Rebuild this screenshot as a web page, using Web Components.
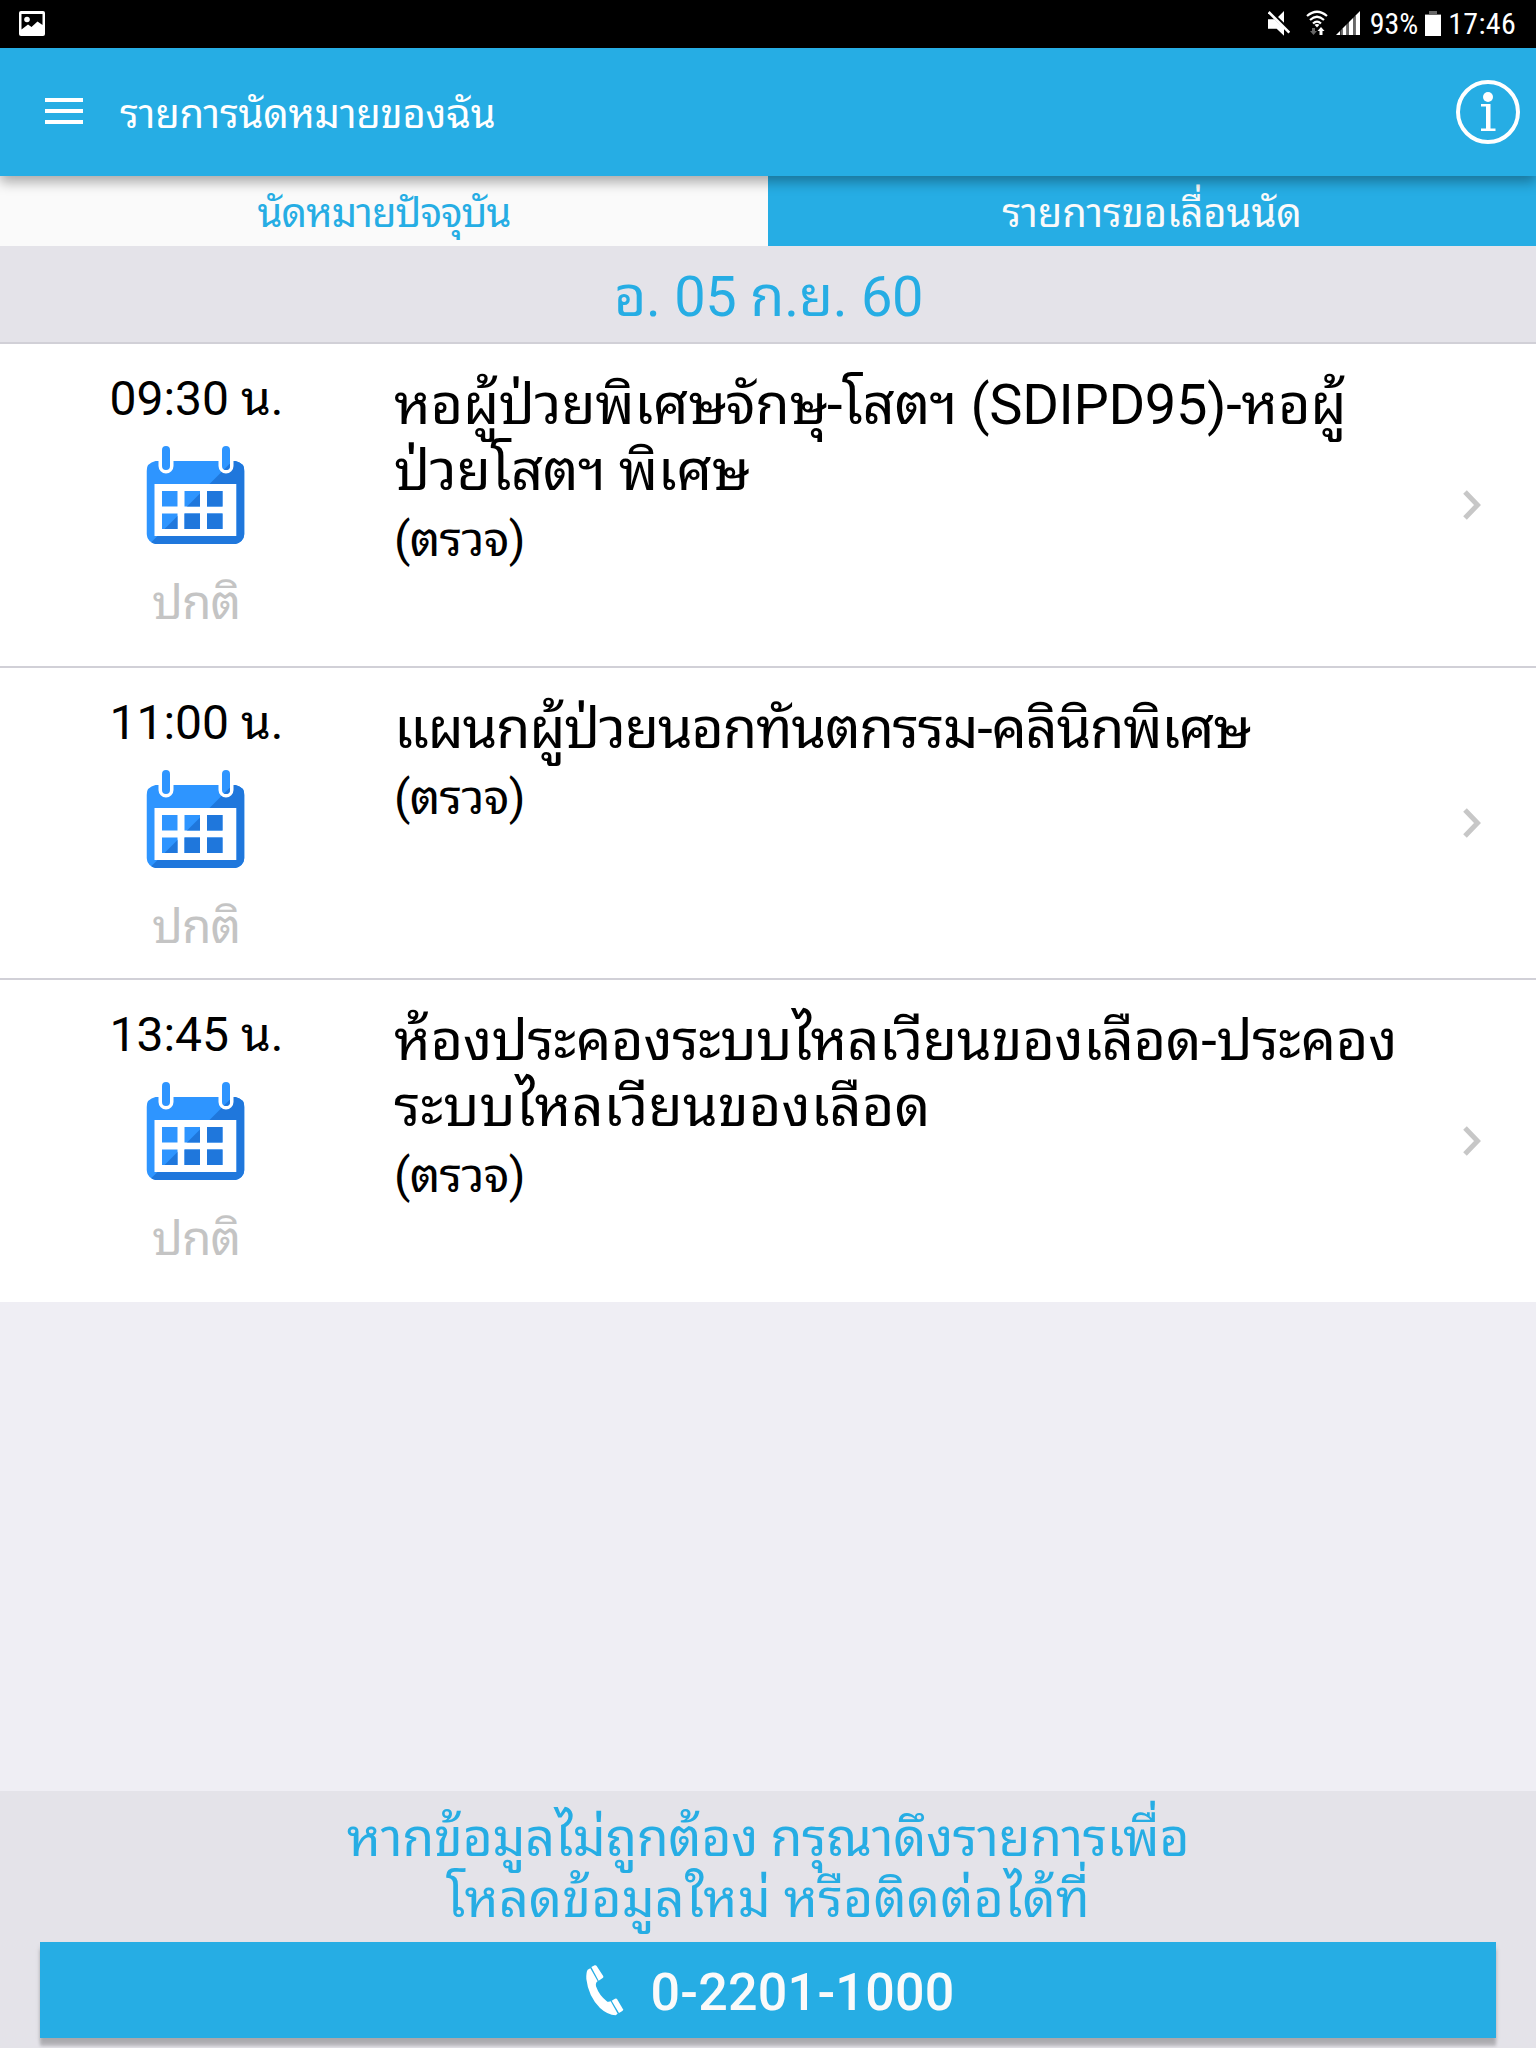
<!doctype html>
<html lang="th">
	<head>
		<meta charset="UTF-8" />
		<meta name="viewport" content="width=device-width, initial-scale=1.0" />
		<title>รายการนัดหมายของฉัน</title>

		<style>
			body {
				margin: 0;
				font-family: Roboto, 'Noto Sans Thai Looped', 'Noto Looped Thai', Loma, Garuda, Waree, Umpush, 'Droid Sans Thai', 'Noto Sans Thai', 'Noto Sans', sans-serif;
			}
		</style>

		<script>
			class StatusBar extends HTMLElement {
				#shadow = this.attachShadow({ mode: 'open' });

				connectedCallback() {
					this.#shadow.innerHTML = `
						<svg class="picture" width="26" height="25" viewBox="0 0 26 25">
							<rect width="26" height="25" rx="2" fill="#fff" />
							<path d="M2.500 3H23.500V14L18.500 10.500L12.500 16L9 13.500L2.500 18.500Z" fill="#000" />
							<circle cx="8" cy="8.500" r="2.800" fill="#fff" />
						</svg>
						<svg class="mute" width="22" height="25" viewBox="24 20 66 75" fill="#fff">
							<path d="M24 45H43L72 72V94L50 73H24ZM54 38L72 20V55Z" />
							<path d="M26 23L88 85" stroke="#fff" stroke-width="8" />
						</svg>
						<svg class="wifi" width="22" height="26" viewBox="0 0 22 26">
							<g fill="none" stroke="#fff" stroke-width="2.2">
								<path d="M1 6Q11 -2.500 21 6" />
								<path d="M4 10Q11 3.500 18 10" />
								<path d="M7 13.500Q11 9.800 15 13.500" />
							</g>
							<path d="M8.500 14.800Q11 13 13.500 14.800L11 17.500Z" fill="#fff" />
							<path d="M6 18H9V21H11L7.500 25L4 21H6Z" fill="#666" />
							<path d="M13.500 25H16.500V21H18.500L15 17L11.500 21H13.500Z" fill="#fff" />
						</svg>
						<svg class="signal" width="24" height="24" viewBox="0 0 24 24">
							<path d="M0 24L4 20V24ZM6.500 24V17.500L10.500 13.500V24ZM13 24V11L17 7V24ZM19.500 24V4.500L24 0V24Z" fill="#fff" />
							<path d="M4.500 24V19.500L6.500 17.500V24ZM10.500 24V13.500L13 11V24ZM17 24V7L19.500 4.500V24Z" fill="#666" />
						</svg>
						<span class="percent">93%</span>
						<svg class="battery" width="16" height="25" viewBox="0 0 16 25">
							<path d="M4 0H12V3H16V8H0V3H4Z" fill="#666" />
							<path d="M0 4H16V25H0Z" fill="#fff" />
						</svg>
						<span class="clock">17:46</span>

						<style>
							:host {
								display: flex;
								align-items: center;
								box-sizing: border-box;
								height: 48px;
								padding: 0 20px 2px 19px;
								background: #000;
								color: #fff;
								font-family: 'Roboto Condensed', Roboto, sans-serif;
								font-size: 30px;
								font-stretch: 75%;
							}

							.picture {
								margin-right: auto;
							}

							.mute {
								margin-right: 16px;
							}

							.wifi {
								margin-right: 8px;
							}

							.signal {
								margin-right: 10px;
							}

							.battery {
								margin: 0 7px 0 7px;
							}

							.clock {
								letter-spacing: 0.3px;
							}
						</style>
					`;
				}
			}

			class AppHeader extends HTMLElement {
				#shadow = this.attachShadow({ mode: 'open' });

				connectedCallback() {
					this.#shadow.innerHTML = `
						<svg class="menu" width="38" height="26" viewBox="0 0 38 26">
							<path d="M0 0H38V4H0ZM0 11H38V15H0ZM0 22H38V26H0Z" fill="#fff" />
						</svg>
						<h1><slot></slot></h1>
						<svg class="info" width="64" height="64" viewBox="0 0 64 64">
							<circle cx="32" cy="32" r="30" fill="none" stroke="#fff" stroke-width="4" />
							<circle cx="32" cy="17" r="5" fill="#fff" />
							<path d="M25 24H34.500V48.500H39.500V51H25V48.500H30V26.500H25Z" fill="#fff" />
						</svg>

						<style>
							:host {
								display: flex;
								align-items: center;
								position: relative;
								z-index: 1;
								box-sizing: border-box;
								height: 128px;
								padding: 0 16px 0 45px;
								background: #26ade4;
								color: #fff;
								box-shadow: 0 6px 12px rgba(0, 0, 0, 0.33);
							}

							.menu {
								margin-bottom: 2px;
							}

							h1 {
								flex: 1;
								margin: 0 0 0 37px;
								padding-top: 5px;
								font-size: 40px;
								font-weight: 400;
								letter-spacing: -0.27px;
								line-height: 60px;
							}
						</style>
					`;
				}
			}

			class TabItem extends HTMLElement {
				#shadow = this.attachShadow({ mode: 'open' });

				connectedCallback() {
					this.#shadow.innerHTML = `
						<slot></slot>

						<style>
							:host {
								display: flex;
								flex: 1;
								justify-content: center;
								align-items: center;
								box-sizing: border-box;
								height: 70px;
								padding-top: 5px;
								background: #26ade4;
								color: #fafafa;
								font-size: 40px;
								letter-spacing: -0.1px;
								line-height: 60px;
							}

							:host([selected]) {
								background: #fafafa;
								color: #26ade4;
								letter-spacing: -0.95px;
							}
						</style>
					`;
				}
			}

			class TabBar extends HTMLElement {
				#shadow = this.attachShadow({ mode: 'open' });

				connectedCallback() {
					this.#shadow.innerHTML = `
						<slot></slot>

						<style>
							:host {
								display: flex;
							}
						</style>
					`;
				}
			}

			class DateHeading extends HTMLElement {
				#shadow = this.attachShadow({ mode: 'open' });

				connectedCallback() {
					this.#shadow.innerHTML = `
						<slot></slot>

						<style>
							:host {
								display: flex;
								justify-content: center;
								align-items: center;
								box-sizing: border-box;
								height: 98px;
								padding: 6px 0 0 1px;
								border-bottom: 2px solid #d1d0d7;
								background: #e4e3e9;
								color: #26ade4;
								font-size: 56px;
								letter-spacing: -0.3px;
								line-height: 80px;
							}
						</style>
					`;
				}
			}

			class CalendarIcon extends HTMLElement {
				#shadow = this.attachShadow({ mode: 'open' });

				connectedCallback() {
					this.#shadow.innerHTML = `
						<svg width="100" height="100" viewBox="0.5 0 100 100">
							<defs>
								<clipPath id="shape">
									<path clip-rule="evenodd" d="M10 16H90Q99 18 99 26V89Q98 97 90 99H10Q2 97 1 89V26Q1 18 10 16ZM9 39V91H91V39Z" />
									<path d="M16.500 46H32V61.500H16.500ZM39 46H54.500V61.500H39ZM61.500 46H77V61.500H61.500ZM16.500 68.500H32V84H16.500ZM39 68.500H54.500V84H39ZM61.500 68.500H77V84H61.500Z" />
								</clipPath>
								<clipPath id="pins">
									<rect x="16.500" y="1" width="8" height="24" rx="4" />
									<rect x="76.500" y="1" width="8" height="24" rx="4" />
								</clipPath>
							</defs>
							<g clip-path="url(#shape)">
								<path d="M0 0H100V100H0Z" fill="#2e95ff" />
								<path d="M100 3L3 100H100Z" fill="#1f77dc" />
							</g>
							<path d="M20.500 14V21M80.500 14V21" stroke="#fff" stroke-width="15" stroke-linecap="round" />
							<g clip-path="url(#pins)">
								<path d="M0 0H100V100H0Z" fill="#2e95ff" />
								<path d="M100 3L3 100H100Z" fill="#1f77dc" />
							</g>
						</svg>

						<style>
							:host {
								display: block;
								height: 100px;
							}

							svg {
								display: block;
							}
						</style>
					`;
				}
			}

			class AppointmentRow extends HTMLElement {
				#shadow = this.attachShadow({ mode: 'open' });

				connectedCallback() {
					this.#shadow.innerHTML = `
						<div class="when">
							<time>${this.getAttribute('time')} น.</time>
							<calendar-icon></calendar-icon>
							<span class="status">${this.getAttribute('status')}</span>
						</div>
						<div class="details">
							<div class="place"><slot></slot></div>
							<div class="kind">(${this.getAttribute('kind')})</div>
						</div>
						<svg class="arrow" width="20" height="32" viewBox="0 0 20 32">
							<path d="M3 3L15.500 16L3 29" fill="none" stroke="#c7c7c7" stroke-width="5" />
						</svg>

						<style>
							:host {
								display: flex;
								box-sizing: border-box;
								height: var(--row-height, 312px);
								padding-right: 54px;
								border-bottom: 2px solid #d1d0d7;
								background: #fff;
								color: #000;
							}

							:host(:last-of-type) {
								border-bottom: none;
							}

							.when {
								display: flex;
								flex-direction: column;
								align-items: center;
								width: 392px;
								padding-top: 23px;
								font-size: 48px;
								line-height: 64px;
							}

							time {
								padding-left: 1px;
							}

							calendar-icon {
								margin: 14px 0 26px;
							}

							.status {
								color: #c4c4c4;
								letter-spacing: -1px;
							}

							.details {
								flex: 1;
								padding: 28px 0 0 2px;
							}

							.place {
								font-size: 56px;
								letter-spacing: -0.35px;
								line-height: 66px;
								white-space: nowrap;
							}

							.kind {
								font-size: 48px;
								letter-spacing: -0.75px;
								line-height: 72px;
							}

							.arrow {
								align-self: center;
							}
						</style>
					`;
				}
			}

			class CallFooter extends HTMLElement {
				#shadow = this.attachShadow({ mode: 'open' });

				connectedCallback() {
					this.#shadow.innerHTML = `
						<p><slot></slot></p>
						<button>
							<svg width="38" height="51" viewBox="51 44 114 153" fill="#fff">
								<path d="M56 58L64 54L86 93Q79 97 81 108Q91 137 115 154Q121 155 125 153L146 190L140 195Q116 194 93 173Q58 138 52 86Q51 66 56 58Z" />
								<path d="M67 50L77 45Q81 44 83 47L103 78Q104 82 100 84L89 91Z" />
								<path d="M128 151L138 145Q142 143 144 146L162 177Q163 180 160 182L150 188Z" />
							</svg>
							<span>${this.getAttribute('phone')}</span>
						</button>

						<style>
							:host {
								display: flex;
								flex-direction: column;
								box-sizing: border-box;
								height: 257px;
								padding: 17px 40px 10px;
								background: #e4e3e9;
							}

							p {
								flex: 1;
								margin: 0;
								color: #26ade4;
								font-size: 52px;
								line-height: 61px;
								text-align: center;
							}

							button {
								display: flex;
								justify-content: center;
								align-items: center;
								gap: 26px;
								height: 96px;
								padding: 4px 0 0 5px;
								border: none;
								background: #26ade4;
								color: #fafafa;
								font: 500 52px Roboto, sans-serif;
								letter-spacing: 0.25px;
								box-shadow: 0 8px 3px rgba(0, 0, 0, 0.19), 0 4px 5px rgba(0, 0, 0, 0.1);
							}

							svg {
								margin-bottom: 4px;
							}
						</style>
					`;
				}
			}

			class AppointmentPage extends HTMLElement {
				#shadow = this.attachShadow({ mode: 'open' });

				connectedCallback() {
					this.#shadow.innerHTML = `
						<slot name="top"></slot>
						<main><slot></slot></main>
						<slot name="bottom"></slot>

						<style>
							:host {
								display: flex;
								flex-direction: column;
								width: 1536px;
								height: 2048px;
								overflow: hidden;
								background: #efeef4;
							}

							main {
								flex: 1;
							}
						</style>
					`;
				}
			}

			customElements.define('status-bar', StatusBar);
			customElements.define('app-header', AppHeader);
			customElements.define('tab-item', TabItem);
			customElements.define('tab-bar', TabBar);
			customElements.define('date-heading', DateHeading);
			customElements.define('calendar-icon', CalendarIcon);
			customElements.define('appointment-row', AppointmentRow);
			customElements.define('call-footer', CallFooter);
			customElements.define('appointment-page', AppointmentPage);
		</script>
	</head>

	<body>
		<appointment-page>
			<status-bar slot="top"></status-bar>
			<app-header slot="top">รายการนัดหมายของฉัน</app-header>
			<tab-bar slot="top">
				<tab-item selected>นัดหมายปัจจุบัน</tab-item>
				<tab-item>รายการขอเลื่อนนัด</tab-item>
			</tab-bar>

			<date-heading>อ. 05 ก.ย. 60</date-heading>
			<appointment-row time="09:30" status="ปกติ" kind="ตรวจ" style="--row-height: 324px">หอผู้ป่วยพิเศษจักษุ-โสตฯ (SDIPD95)-หอผู้<br />ป่วยโสตฯ พิเศษ</appointment-row>
			<appointment-row time="11:00" status="ปกติ" kind="ตรวจ"><span style="letter-spacing: -1.3px">แผนกผู้ป่วยนอกทันตกรรม-คลินิกพิเศษ</span></appointment-row>
			<appointment-row time="13:45" status="ปกติ" kind="ตรวจ" style="--row-height: 322px">ห้องประคองระบบไหลเวียนของเลือด-ประคอง<br /><span style="letter-spacing: 0.05px">ระบบไหลเวียนของเลือด</span></appointment-row>

			<call-footer slot="bottom" phone="0-2201-1000"><span style="letter-spacing: -0.35px">หากข้อมูลไม่ถูกต้อง กรุณาดึงรายการเพื่อ</span><br /><span style="letter-spacing: 0.12px">โหลดข้อมูลใหม่ หรือติดต่อได้ที่</span></call-footer>
		</appointment-page>
	</body>
</html>
